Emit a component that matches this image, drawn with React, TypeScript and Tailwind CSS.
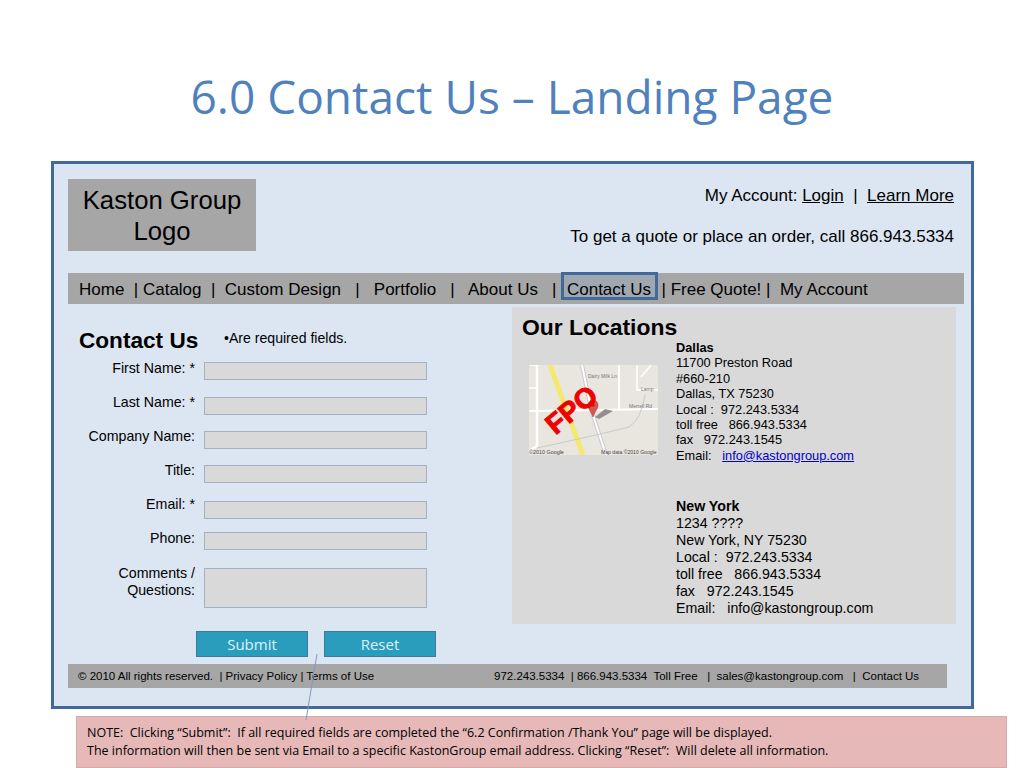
const fields = [
  { label: "First Name: *", top: "mt-[14px]", labelTop: "-mt-[2px]" },
  { label: "Last Name: *", top: "mt-[17px]", labelTop: "-mt-[3px]" },
  { label: "Company Name:", top: "mt-[16px]", labelTop: "-mt-[3px]" },
  { label: "Title:", top: "mt-[16px]", labelTop: "-mt-[3px]" },
  { label: "Email: *", top: "mt-[18px]", labelTop: "-mt-[5px]" },
  { label: "Phone:", top: "mt-[13px]", labelTop: "-mt-[2px]" },
];

function MapThumb() {
  return (
    <div className="relative w-[129px] h-[90px] mt-[25px] shrink-0 overflow-hidden">
      <svg width="129" height="90" viewBox="0 0 129 90" className="block">
        <rect width="129" height="90" fill="#e8e6df" />
        <path d="M0 46 L129 44" stroke="#fff" strokeWidth="2" />
        <path d="M8 0 L8 81 L0 86" stroke="#fff" strokeWidth="2.5" fill="none" />
        <path d="M0 23 L8 23 M0 0 L8 0" stroke="#fff" strokeWidth="1.5" />
        <path d="M53 0 L62 44 L77 90" stroke="#c9c9c9" strokeWidth="4" fill="none" />
        <path d="M53 0 L62 44 L77 90" stroke="#fff" strokeWidth="2" fill="none" />
        <path d="M90 0 L90 44" stroke="#fff" strokeWidth="2" />
        <path d="M21 0 L54 90" stroke="#f5e86f" strokeWidth="5" fill="none" />
        <path d="M108 0 L108 25 L129 25 M112 12 L122 0" stroke="#fff" strokeWidth="1.5" fill="none" />
        <path d="M8 83 Q60 72 100 62 Q112 55 116 30" stroke="#c5ccc9" strokeWidth="1" fill="none" />
        <text x="59" y="13" fontSize="5" fill="#777" fontFamily="Liberation Sans">Dairy Milk Ln</text>
        <text x="100" y="43" fontSize="5" fill="#777" fontFamily="Liberation Sans">Merrell Rd</text>
        <text x="112" y="26" fontSize="5" fill="#777" fontFamily="Liberation Sans">Lamp</text>
        <text x="0" y="89" fontSize="5.4" fill="#444" fontFamily="Liberation Sans">©2010 Google</text>
        <text x="72" y="89" fontSize="5.1" fill="#444" fontFamily="Liberation Sans">Map data ©2010 Google</text>
        <path d="M66 52 L76 44 L84 46 L70 54 Z" fill="#7a7a7a" opacity="0.8" />
        <path d="M64 52 C62 46 59 44 59 40 A4.8 4.8 0 0 1 69 40 C69 44 66 46 64 52 Z" fill="#d9534f" stroke="#a33" strokeWidth="0.5" />
        <circle cx="64" cy="40" r="1.5" fill="#7a1f1f" />
      </svg>
      <span className="absolute left-[14px] top-[31px] text-[#f00000] text-[28px] font-bold leading-none -rotate-[40deg] [-webkit-text-stroke:1px_#f00000] font-['Liberation_Sans',sans-serif]">
        FPO
      </span>
    </div>
  );
}

export default function App() {
  return (
    <div className="w-[1024px] h-[768px] bg-white overflow-hidden font-['Liberation_Sans',Arial,sans-serif] text-black">
      <div className="h-[161px] pt-[65px] text-center text-[46px] leading-[62px] text-[#4f81bd] font-['Open_Sans',sans-serif]">
        6.0 Contact Us – Landing Page
      </div>

      <div className="relative ml-[51px] w-[923px] h-[548px] border-[3px] border-[#41699b] bg-[#dce6f2] pl-[14px]">
        {/* header */}
        <div className="flex pt-[15px] h-[109px]">
          <div className="w-[188px] h-[72px] bg-[#a6a6a6] text-center text-[25.7px] leading-[31px] pt-[6px]">
            Kaston Group
            <br />
            Logo
          </div>
          <div className="w-[698px] text-right text-[17px]">
            <div className="mt-[7px] leading-[20px] whitespace-pre">
              My Account: <span className="underline">Login</span>  |  <span className="underline">Learn More</span>
            </div>
            <div className="mt-[21px] leading-[20px]">To get a quote or place an order, call 866.943.5334</div>
          </div>
        </div>

        {/* nav */}
        <div className="w-[896px] h-[31px] bg-[#a6a6a6] pl-[11px] text-[17px] leading-[33px] whitespace-pre">
          {"Home  | Catalog  |  Custom Design   |   Portfolio   |   About Us   |  "}
          <span className="relative mx-[1px]">
            <span className="absolute -left-[6px] -top-[8px] w-[97px] h-[28px] border-[3px] border-[#41699b] bg-[#8fa9c9]/30" />
            <span className="relative">Contact Us</span>
          </span>
          {"  | Free Quote! |  My Account"}
        </div>

        <div className="flex h-[317px] mt-[3px]">
          {/* form */}
          <div className="w-[444px]">
            <div className="flex items-start pl-[11px] pt-[21px] h-[41px]">
              <span className="w-[145px] text-[22.6px] leading-[26px] font-bold">Contact Us</span>
              <span className="text-[14.1px] leading-[20px]">•Are required fields.</span>
            </div>
            {fields.map((f) => (
              <div key={f.label} className={`flex ${f.top}`}>
                <label className={`w-[127px] text-right text-[14.2px] leading-[16px] ${f.labelTop}`}>{f.label}</label>
                <div className="ml-[9px] w-[223px] h-[18px] bg-[#d9d9d9] border border-[#a3b1c4]" />
              </div>
            ))}
            <div className="flex mt-[18px]">
              <label className="w-[127px] text-right text-[14.2px] leading-[17px] -mt-[3px]">
                Comments /
                <br />
                Questions:
              </label>
              <div className="ml-[9px] w-[223px] h-[40px] bg-[#d9d9d9] border border-[#a3b1c4]" />
            </div>
          </div>

          {/* locations */}
          <div className="w-[444px] bg-[#d9d9d9] pl-[10px] pt-[7px]">
            <div className="text-[22.9px] leading-[26px] font-bold">Our Locations</div>
            <div className="flex">
              <div className="ml-[7px]">
                <MapThumb />
              </div>
              <div className="ml-[18px]">
                <div className="text-[12.8px] leading-[15.4px]">
                  <b>Dallas</b>
                  <div>11700 Preston Road</div>
                  <div>#660-210</div>
                  <div>Dallas, TX 75230</div>
                  <div className="whitespace-pre">Local :  972.243.5334</div>
                  <div className="whitespace-pre">toll free   866.943.5334</div>
                  <div className="whitespace-pre">fax   972.243.1545</div>
                  <div className="whitespace-pre">
                    Email:   <span className="text-[#0000cc] underline">info@kastongroup.com</span>
                  </div>
                </div>
                <div className="mt-[35px] text-[14.2px] leading-[17px]">
                  <b>New York</b>
                  <div>1234 ????</div>
                  <div>New York, NY 75230</div>
                  <div className="whitespace-pre">Local :  972.243.5334</div>
                  <div className="whitespace-pre">toll free   866.943.5334</div>
                  <div className="whitespace-pre">fax   972.243.1545</div>
                  <div className="whitespace-pre">Email:   info@kastongroup.com</div>
                </div>
              </div>
            </div>
          </div>
        </div>

        {/* buttons */}
        <div className="flex gap-[16px] pl-[128px] mt-[7px] font-['Open_Sans',sans-serif]">
          <div className="w-[112px] h-[26px] bg-[#2a9dbd] border border-[#3a7a9c] text-center text-[#dff1f6] text-[15px] leading-[24px]">
            Submit
          </div>
          <div className="w-[112px] h-[26px] bg-[#2a9dbd] border border-[#3a7a9c] text-center text-[#dff1f6] text-[15px] leading-[24px]">
            Reset
          </div>
        </div>

        {/* footer */}
        <div className="flex w-[879px] h-[24px] mt-[7px] bg-[#a6a6a6] pl-[10px] text-[11.5px] leading-[24px] whitespace-pre">
          <div className="w-[416px]">© 2010 All rights reserved.  | Privacy Policy | Terms of Use</div>
          <div>972.243.5334  | 866.943.5334  Toll Free   |  sales@kastongroup.com   |  Contact Us</div>
        </div>

        {/* callout leader line */}
        <svg className="absolute left-[250px] top-[490px]" width="16" height="66" viewBox="0 0 16 66">
          <path d="M13 0 L2 66" stroke="#7f9bbd" strokeWidth="1" fill="none" />
        </svg>
      </div>

      <div className="ml-[76px] mt-[7px] w-[931px] h-[52px] bg-[#e6b9b8] border border-[#d9a9a8] pl-[10px] pt-[7px] text-[12.5px] leading-[18px] whitespace-pre font-['Open_Sans',sans-serif]">
        <div>NOTE:  Clicking “Submit”:  If all required fields are completed the “6.2 Confirmation /Thank You” page will be displayed.</div>
        <div>The information will then be sent via Email to a specific KastonGroup email address. Clicking “Reset”:  Will delete all information.</div>
      </div>
    </div>
  );
}
